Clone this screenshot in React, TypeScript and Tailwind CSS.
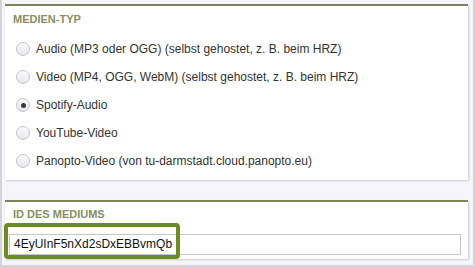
import React from 'react';

const OPTIONS = [
  'Audio (MP3 oder OGG) (selbst gehostet, z. B. beim HRZ)',
  'Video (MP4, OGG, WebM) (selbst gehostet, z. B. beim HRZ)',
  'Spotify-Audio',
  'YouTube-Video',
  'Panopto-Video (von tu-darmstadt.cloud.panopto.eu)',
];

const Radio = ({ checked }: { checked?: boolean }) => (
  <span className="flex h-[14px] w-[14px] flex-shrink-0 items-center justify-center rounded-full border border-[#c4c4c8] bg-gradient-to-b from-[#fafafa] to-[#e8e8ec]">
    {checked && <span className="h-[5px] w-[5px] rounded-full bg-[#3a3a3a]" />}
  </span>
);

export default function App() {
  return (
    <div
      className="h-[267px] w-[475px] overflow-hidden border-l-2 border-r-2 border-b-2 border-[#d4d4da] bg-[#f6f6fa] pl-[3px] pt-[4px]"
      style={{ fontFamily: '"Liberation Sans", Arial, sans-serif' }}
    >
      {/* Medien-Typ */}
      <div className="h-[176px] w-[463px] border-t-2 border-[#7b8559] bg-white shadow-[1px_1px_2px_rgba(0,0,0,0.18)]">
        <div className="px-[8px] pt-[6px] text-[11px] font-bold leading-[14px] text-[#87905f]">MEDIEN-TYP</div>
        <div className="mt-[9px] flex flex-col pl-[11px]">
          {OPTIONS.map((opt, i) => (
            <div key={opt} className="flex h-[28px] items-center gap-[6px] text-[12px] text-[#333]">
              <Radio checked={i === 2} />
              <span>{opt}</span>
            </div>
          ))}
        </div>
      </div>

      {/* ID des Mediums */}
      <div className="mt-[20px] h-[59px] w-[463px] border-t-2 border-[#7b8559] bg-white shadow-[1px_1px_2px_rgba(0,0,0,0.18)]">
        <div className="px-[8px] pt-[5px] text-[11px] font-bold leading-[14px] text-[#87905f]">ID DES MEDIUMS</div>
        <div className="relative mx-[4px] mt-[10px]">
          <input
            readOnly
            value="4EyUInF5nXd2sDxEBBvmQb"
            className="h-[21px] w-[452px] border border-[#c6c6ce] bg-white px-[4px] text-[12px] text-[#111] outline-none"
            style={{ fontFamily: '"Liberation Sans", Arial, sans-serif' }}
          />
          <div className="pointer-events-none absolute left-[-5px] top-[-8px] h-[36px] w-[176px] rounded-[4px] border-[4px] border-[#6a8c22]" />
        </div>
      </div>
    </div>
  );
}
